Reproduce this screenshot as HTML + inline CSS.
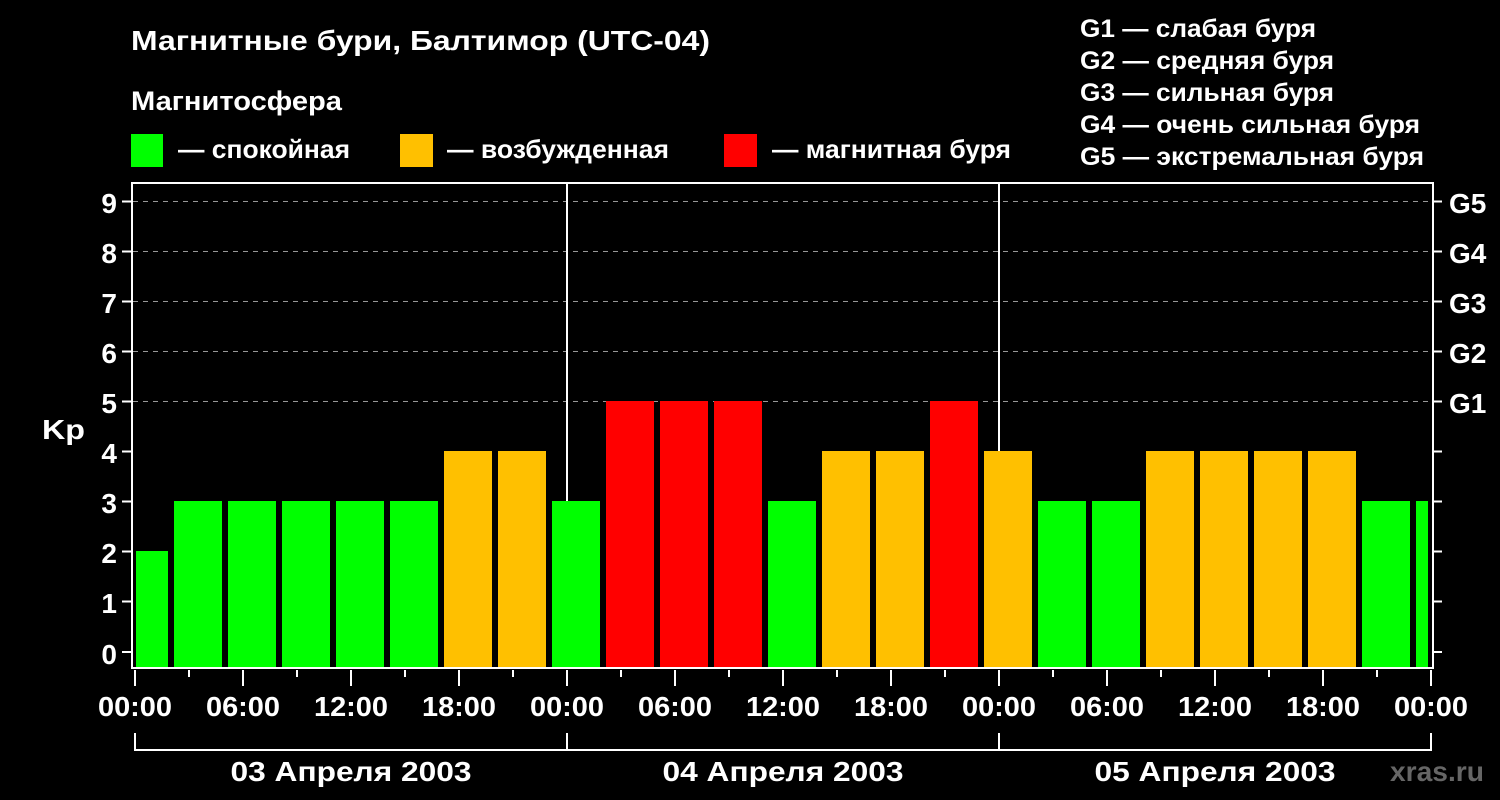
<!DOCTYPE html><html><head><meta charset="utf-8"><style>body{margin:0;background:#000}svg{display:block}text{font-family:"Liberation Sans",Arial,sans-serif;font-weight:bold;fill:#fff}</style></head><body>
<svg width="1500" height="800" viewBox="0 0 1500 800">
<rect width="1500" height="800" fill="#000"/>
<text x="131" y="50" font-size="28" textLength="579" lengthAdjust="spacingAndGlyphs">Магнитные бури, Балтимор (UTC-04)</text>
<text x="131" y="110" font-size="27" textLength="211" lengthAdjust="spacingAndGlyphs">Магнитосфера</text>
<rect x="131" y="134" width="32" height="33" fill="#00ff00"/><text x="178" y="158" font-size="26" textLength="172" lengthAdjust="spacingAndGlyphs">— спокойная</text>
<rect x="400" y="134" width="33" height="33" fill="#ffc000"/><text x="447" y="158" font-size="26" textLength="222" lengthAdjust="spacingAndGlyphs">— возбужденная</text>
<rect x="724" y="134" width="33" height="33" fill="#ff0000"/><text x="772" y="158" font-size="26" textLength="239" lengthAdjust="spacingAndGlyphs">— магнитная буря</text>
<g font-size="25"><text x="1080" y="37" textLength="236" lengthAdjust="spacingAndGlyphs">G1 — слабая буря</text><text x="1080" y="69" textLength="254" lengthAdjust="spacingAndGlyphs">G2 — средняя буря</text><text x="1080" y="101" textLength="254" lengthAdjust="spacingAndGlyphs">G3 — сильная буря</text><text x="1080" y="133" textLength="340" lengthAdjust="spacingAndGlyphs">G4 — очень сильная буря</text><text x="1080" y="165" textLength="344" lengthAdjust="spacingAndGlyphs">G5 — экстремальная буря</text></g>
<g stroke="#999" stroke-width="1" stroke-dasharray="5,5"><line x1="133" x2="1432" y1="201.5" y2="201.5"/><line x1="133" x2="1432" y1="251.5" y2="251.5"/><line x1="133" x2="1432" y1="301.5" y2="301.5"/><line x1="133" x2="1432" y1="351.5" y2="351.5"/><line x1="133" x2="1432" y1="401.5" y2="401.5"/></g>
<g>
<rect x="136" y="551" width="32" height="116" fill="#00ff00"/>
<rect x="174" y="501" width="48" height="166" fill="#00ff00"/>
<rect x="228" y="501" width="48" height="166" fill="#00ff00"/>
<rect x="282" y="501" width="48" height="166" fill="#00ff00"/>
<rect x="336" y="501" width="48" height="166" fill="#00ff00"/>
<rect x="390" y="501" width="48" height="166" fill="#00ff00"/>
<rect x="444" y="451" width="48" height="216" fill="#ffc000"/>
<rect x="498" y="451" width="48" height="216" fill="#ffc000"/>
<rect x="552" y="501" width="48" height="166" fill="#00ff00"/>
<rect x="606" y="401" width="48" height="266" fill="#ff0000"/>
<rect x="660" y="401" width="48" height="266" fill="#ff0000"/>
<rect x="714" y="401" width="48" height="266" fill="#ff0000"/>
<rect x="768" y="501" width="48" height="166" fill="#00ff00"/>
<rect x="822" y="451" width="48" height="216" fill="#ffc000"/>
<rect x="876" y="451" width="48" height="216" fill="#ffc000"/>
<rect x="930" y="401" width="48" height="266" fill="#ff0000"/>
<rect x="984" y="451" width="48" height="216" fill="#ffc000"/>
<rect x="1038" y="501" width="48" height="166" fill="#00ff00"/>
<rect x="1092" y="501" width="48" height="166" fill="#00ff00"/>
<rect x="1146" y="451" width="48" height="216" fill="#ffc000"/>
<rect x="1200" y="451" width="48" height="216" fill="#ffc000"/>
<rect x="1254" y="451" width="48" height="216" fill="#ffc000"/>
<rect x="1308" y="451" width="48" height="216" fill="#ffc000"/>
<rect x="1362" y="501" width="48" height="166" fill="#00ff00"/>
<rect x="1416" y="501" width="12" height="166" fill="#00ff00"/>
</g>
<g stroke="#fff" stroke-width="2" fill="none">
<line x1="567" y1="183" x2="567" y2="401"/><line x1="567" y1="401" x2="567" y2="501"/><line x1="999" y1="183" x2="999" y2="451"/>
<rect x="132" y="183" width="1301" height="485"/>
<path d="M122 201.5H132M122 251.5H132M122 301.5H132M122 351.5H132M122 401.5H132M122 451.5H132M122 501.5H132M122 551.5H132M122 601.5H132M122 652H132"/>
<path d="M1433 201.5H1442M1433 251.5H1442M1433 301.5H1442M1433 351.5H1442M1433 401.5H1442M1433 451.5H1442M1433 501.5H1442M1433 551.5H1442M1433 601.5H1442M1433 652H1442"/>
<path d="M135 670V686M243 670V686M351 670V686M459 670V686M567 670V686M675 670V686M783 670V686M891 670V686M999 670V686M1107 670V686M1215 670V686M1323 670V686M1431 670V686"/>
<path d="M189 670V677M297 670V677M405 670V677M513 670V677M621 670V677M729 670V677M837 670V677M945 670V677M1053 670V677M1161 670V677M1269 670V677M1377 670V677"/>
<path d="M135 733V750H1431V733M567 733V750M999 733V750"/>
</g>
<g font-size="28" text-anchor="end"><text x="117" y="213">9</text><text x="117" y="263">8</text><text x="117" y="313">7</text><text x="117" y="363">6</text><text x="117" y="413">5</text><text x="117" y="463">4</text><text x="117" y="513">3</text><text x="117" y="563">2</text><text x="117" y="613">1</text><text x="117" y="664">0</text></g>
<text x="42" y="439" font-size="28" textLength="43" lengthAdjust="spacingAndGlyphs">Kp</text>
<g font-size="28"><text x="1449" y="213">G5</text><text x="1449" y="263">G4</text><text x="1449" y="313">G3</text><text x="1449" y="363">G2</text><text x="1449" y="413">G1</text></g>
<g font-size="28" text-anchor="middle"><text x="135" y="716" textLength="74" lengthAdjust="spacingAndGlyphs">00:00</text><text x="243" y="716" textLength="74" lengthAdjust="spacingAndGlyphs">06:00</text><text x="351" y="716" textLength="74" lengthAdjust="spacingAndGlyphs">12:00</text><text x="459" y="716" textLength="74" lengthAdjust="spacingAndGlyphs">18:00</text><text x="567" y="716" textLength="74" lengthAdjust="spacingAndGlyphs">00:00</text><text x="675" y="716" textLength="74" lengthAdjust="spacingAndGlyphs">06:00</text><text x="783" y="716" textLength="74" lengthAdjust="spacingAndGlyphs">12:00</text><text x="891" y="716" textLength="74" lengthAdjust="spacingAndGlyphs">18:00</text><text x="999" y="716" textLength="74" lengthAdjust="spacingAndGlyphs">00:00</text><text x="1107" y="716" textLength="74" lengthAdjust="spacingAndGlyphs">06:00</text><text x="1215" y="716" textLength="74" lengthAdjust="spacingAndGlyphs">12:00</text><text x="1323" y="716" textLength="74" lengthAdjust="spacingAndGlyphs">18:00</text><text x="1431" y="716" textLength="74" lengthAdjust="spacingAndGlyphs">00:00</text>
<text x="351" y="781" textLength="241" lengthAdjust="spacingAndGlyphs">03 Апреля 2003</text><text x="783" y="781" textLength="241" lengthAdjust="spacingAndGlyphs">04 Апреля 2003</text><text x="1215" y="781" textLength="241" lengthAdjust="spacingAndGlyphs">05 Апреля 2003</text></g>
<text x="1437" y="781" font-size="28" text-anchor="middle" textLength="94" lengthAdjust="spacingAndGlyphs" style="fill:#666">xras.ru</text>
</svg></body></html>
